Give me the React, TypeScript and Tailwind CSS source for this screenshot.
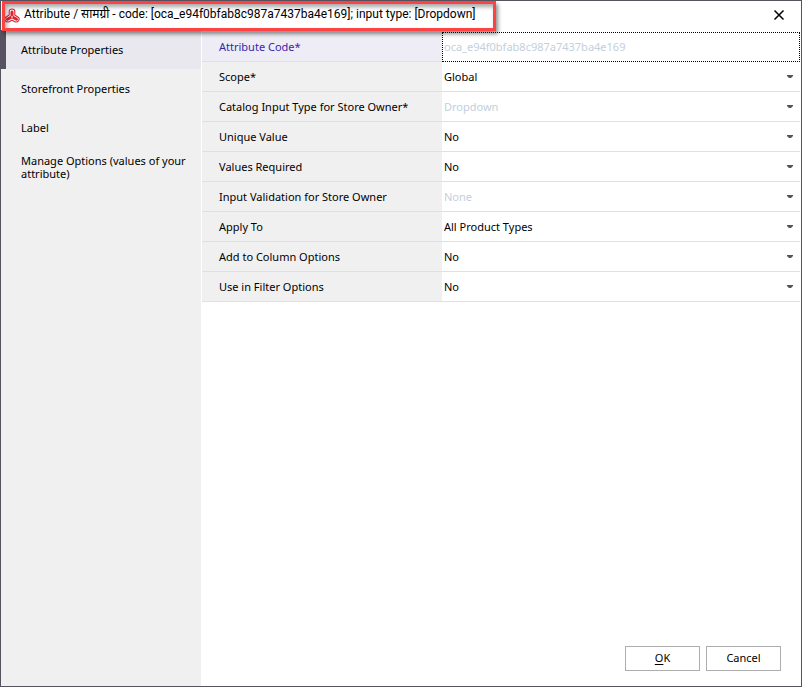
import { useState } from "react";

const TABS = [
  "Attribute Properties",
  "Storefront Properties",
  "Label",
  "Manage Options (values of your attribute)",
];

type Field = {
  id: string;
  label: string;
  options: string[];
  disabled?: boolean;
};

const FIELDS: Field[] = [
  { id: "scope", label: "Scope*", options: ["Global", "Website", "Store View"] },
  {
    id: "input-type",
    label: "Catalog Input Type for Store Owner*",
    options: ["Dropdown"],
    disabled: true,
  },
  { id: "unique", label: "Unique Value", options: ["No", "Yes"] },
  { id: "required", label: "Values Required", options: ["No", "Yes"] },
  {
    id: "validation",
    label: "Input Validation for Store Owner",
    options: ["None"],
    disabled: true,
  },
  { id: "apply-to", label: "Apply To", options: ["All Product Types"] },
  { id: "column-options", label: "Add to Column Options", options: ["No", "Yes"] },
  { id: "filter-options", label: "Use in Filter Options", options: ["No", "Yes"] },
];

export default function App() {
  const [tab, setTab] = useState(0);

  return (
    <div className="flex min-h-screen flex-col border border-[#56525f] bg-white font-['Noto_Sans','Open_Sans',sans-serif] text-[11px] text-black">
      <TitleBar />
      <div className="flex flex-1">
        <nav className="w-[200px] shrink-0 bg-[#f0f0f0]">
          {TABS.map((name, i) => (
            <button
              key={name}
              type="button"
              onClick={() => setTab(i)}
              className={`flex h-[39px] w-full items-center border-l-[5px] pr-3 pl-[15px] text-left leading-[13px] ${
                tab === i ? "border-[#56525f] bg-[#e9e8ee]" : "border-transparent"
              }`}
            >
              {name}
            </button>
          ))}
        </nav>
        <main className="flex flex-1 flex-col justify-between px-px pt-0.5">
          <div>
            <div className="flex h-[30px]">
              <label
                htmlFor="code"
                className="flex w-60 shrink-0 items-center border-b border-[#e0e0e0] bg-[#eeedf5] pt-0.5 pl-[17px] text-[#3a1fae]"
              >
                Attribute Code*
              </label>
              <input
                id="code"
                type="text"
                disabled
                value="oca_e94f0bfab8c987a7437ba4e169"
                className="min-w-0 flex-1 border border-dotted border-black pl-px text-[#c3cfdd]"
              />
            </div>
            {FIELDS.map((field) => (
              <SelectRow key={field.id} field={field} />
            ))}
          </div>
          <div className="flex justify-end gap-1.5 pr-[19px] pb-[15px]">
            <DialogButton>
              <span className="underline underline-offset-2">O</span>K
            </DialogButton>
            <DialogButton>Cancel</DialogButton>
          </div>
        </main>
      </div>
    </div>
  );
}

function TitleBar() {
  return (
    <header className="relative flex h-[29px] items-center pr-3.5 pl-[3px]">
      <LogoIcon />
      <h1 className="ml-1 flex-1 pb-1 font-[Roboto,'Noto_Sans',sans-serif] text-[12px] leading-4 whitespace-nowrap">
        Attribute / सामग्री - code: [oca_e94f0bfab8c987a7437ba4e169]; input type: [Dropdown]
      </h1>
      <button type="button" aria-label="Close" className="p-0.5 pb-1">
        <svg className="size-3" viewBox="0 0 12 12" fill="none" stroke="#000" strokeWidth="1.5">
          <path d="M1.500 1.500l9 9M10.500 1.500l-9 9" />
        </svg>
      </button>
      {/* highlight around the window title */}
      <div className="pointer-events-none absolute top-0 left-px h-[30px] w-[494px] border-[3px] border-[#fb4343] shadow-[2px_3px_4px_rgba(0,0,0,0.45),inset_2px_3px_4px_rgba(0,0,0,0.35)]" />
    </header>
  );
}

function LogoIcon() {
  return (
    <svg className="h-4 w-4 shrink-0" viewBox="0 0 16 16" fill="none">
      <g stroke="#dc2430" strokeWidth="1.100" strokeLinejoin="round">
        <path d="M5.200 3.200Q5.200 1 8 1t2.800 2.200V7l3.400 2.200q1.600 1.400.6 3.200t-3.400 1.600L8 12.200 4.600 14q-2.400.2-3.400-1.600t.6-3.200L5.200 7z" />
      </g>
      <g stroke="#dc2430" strokeWidth="3" strokeLinecap="round">
        <path d="M8 4v4.500M8 8.700l-4.500 2.600M8 8.700l4.500 2.600" />
      </g>
      <path d="M8 7.600l1.100 1.900H6.900z" fill="#fff" />
    </svg>
  );
}

function SelectRow({ field }: { field: Field }) {
  return (
    <div className="flex h-[30px] border-b border-[#e0e0e0]">
      <label
        htmlFor={field.id}
        className="flex w-60 shrink-0 items-center bg-[#f0f0f0] pt-0.5 pl-[17px]"
      >
        {field.label}
      </label>
      <div className="relative flex flex-1">
        <select
          id={field.id}
          disabled={field.disabled}
          className="w-full appearance-none pt-0.5 pl-0.5 disabled:text-[#c3cfdd] disabled:opacity-100"
        >
          {field.options.map((option) => (
            <option key={option}>{option}</option>
          ))}
        </select>
        <svg
          className="pointer-events-none absolute top-[13px] right-[7px] h-[3px] w-[6px]"
          viewBox="0 0 6 3"
          fill="#555"
        >
          <path d="M0 0h6v1L4 3H2L0 1z" />
        </svg>
      </div>
    </div>
  );
}

function DialogButton({ children }: { children: React.ReactNode }) {
  return (
    <button type="button" className="h-[25px] w-[75px] border border-[#adadad] bg-white">
      {children}
    </button>
  );
}
